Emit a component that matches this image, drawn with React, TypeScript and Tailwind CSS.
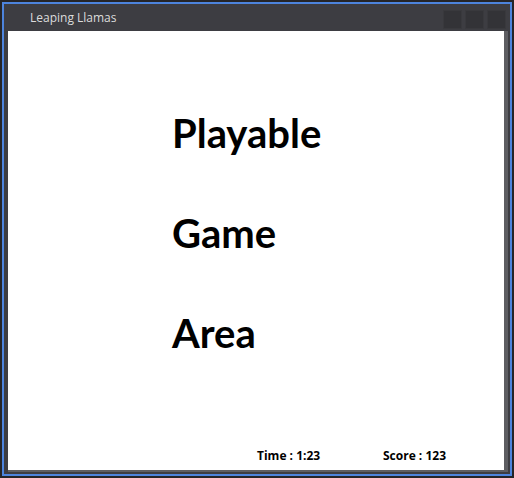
import React from 'react';

const words = ['Playable', 'Game', 'Area'];

export default function App() {
  return (
    <div className="w-[514px] h-[478px] bg-[#252528] p-[2px]" style={{ fontFamily: '"Open Sans", "Noto Sans", sans-serif' }}>
      <div className="w-full h-full border-2 border-[#4d84dd] bg-[#3d3d42] flex flex-col">
        {/* title bar */}
        <div className="h-[27px] flex items-center shrink-0">
          <span className="pl-[26px] text-[12px] text-[#dcdcdc] leading-none pt-[1px]">Leaping Llamas</span>
          <div className="ml-auto mr-[4px] mt-[4px] flex gap-[3px]">
            <div className="w-[19px] h-[19px] bg-[#333337] border border-[#39393d]" />
            <div className="w-[19px] h-[19px] bg-[#333337] border border-[#39393d]" />
            <div className="w-[19px] h-[19px] bg-[#333337] border border-[#39393d]" />
          </div>
        </div>

        {/* window body */}
        <div className="flex-1 flex ml-[4px] mr-[2px] mb-[2px]">
          <div className="flex-1 flex flex-col bg-white border-r-4 border-b-2 border-[#5e5e62]">
            <div className="pt-[52px] pl-[164px] flex flex-col font-['Lato',sans-serif]">
              {words.map((w) => (
                <div key={w} className="text-[40px] font-bold leading-[100px] text-black">
                  {w}
                </div>
              ))}
            </div>
            <div className="mt-auto pb-[6px] flex text-[12px] font-bold leading-[16px] text-black">
              <span className="ml-[249px] w-[126px]">Time : 1:23</span>
              <span>Score : 123</span>
            </div>
          </div>
        </div>
      </div>
    </div>
  );
}
